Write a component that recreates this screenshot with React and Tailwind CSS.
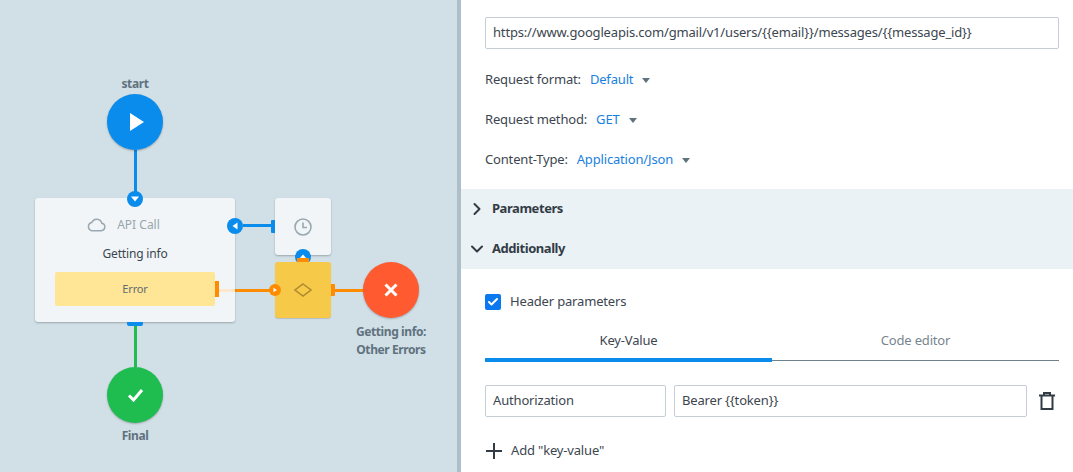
import { Check, ChevronDown, ChevronRight } from "lucide-react";

const FONT = "font-['Noto_Sans','Liberation_Sans',sans-serif]";

function Port({ className, dir, color = "bg-[#0a8ced]" }) {
  const points = {
    down: "4,5.5 12,5.5 8,10.5",
    left: "10.5,4.5 10.5,11.5 5.5,8",
    up: "4,10 12,10 8,5.5",
    right: "6,5 6,11 10.5,8",
  };
  return (
    <div className={`absolute rounded-full ${color} ${className}`}>
      <svg viewBox="0 0 16 16" className="h-full w-full">
        <polygon points={points[dir]} fill="#fff" />
      </svg>
    </div>
  );
}

function Canvas() {
  return (
    <div className="relative h-full w-[457px] shrink-0 bg-[#d1dfe6]">
      {/* connectors */}
      <div className="absolute left-[134px] top-[150px] h-[48px] w-[3px] bg-[#0a8ced]" />
      <div className="absolute left-[134px] top-[326px] h-[41px] w-[3px] bg-[#1fbc50]" />
      <div className="absolute left-[243px] top-[224px] h-[3px] w-[28px] bg-[#0a8ced]" />
      <div className="absolute left-[335px] top-[289px] h-[3px] w-[29px] bg-[#ff8c00]" />
      <div className="absolute left-[235px] top-[289px] h-[3px] w-[36px] bg-[#ff8c00]" />

      <p className="absolute left-[85px] top-[76px] w-[100px] text-center text-[12px] font-bold leading-4 tracking-[-0.4px] text-[#60727e]">
        start
      </p>
      <div className="absolute left-[107px] top-[94px] flex h-[56px] w-[56px] items-center justify-center rounded-full bg-[#0a8ced] shadow-[0_1px_2px_rgba(0,0,0,0.25)]">
        <svg viewBox="0 0 16 20" className="ml-[3px] h-[20px] w-[16px]">
          <polygon points="1,1 15,10 1,19" fill="#fff" />
        </svg>
      </div>

      {/* API call node */}
      <div className="absolute left-[35px] top-[198px] h-[124px] w-[200px] rounded-[3px] bg-[#f1f5f7] shadow-[0_1px_2px_rgba(0,0,0,0.25)]">
        <div className="mt-[17px] flex h-[20px] items-center justify-center gap-[11px] pr-[23px]">
          <svg viewBox="0 0 20 14" className="h-[14px] w-[19px]" fill="none" stroke="#9aa8b1" strokeWidth="1.6">
            <path d="M5 13h10a4 4 0 0 0 .6-7.9A5.6 5.6 0 0 0 5 4.4 4.4 4.4 0 0 0 5 13z" />
          </svg>
          <span className="text-[12px] leading-5 tracking-normal text-[#9aa5ad]">API Call</span>
        </div>
        <p className="mt-[9px] text-center text-[12px] leading-5 text-[#3c4650]">Getting info</p>
        <div className="relative mx-[20px] mt-[8px] flex h-[34px] items-center justify-center rounded-[2px] bg-[#ffe596] text-[11px] text-[#5f6b73]">
          Error
          <div className="absolute left-[160px] top-[9px] h-[16px] w-[4px] bg-[#ff8c00]" />
        </div>
      </div>
      <div className="absolute left-[219px] top-[289px] h-[3px] w-[16px] bg-[#fde7cf]" />
      <Port dir="down" className="left-[127px] top-[191px] h-[16px] w-[16px]" />
      <Port dir="left" className="left-[227px] top-[218px] h-[16px] w-[16px]" />
      <div className="absolute left-[127px] top-[322px] h-[4px] w-[16px] rounded-b-[2px] bg-[#0a8ced]" />

      {/* timer node */}
      <div className="absolute left-[275px] top-[198px] flex h-[57px] w-[56px] items-center justify-center rounded-[3px] bg-[#f1f5f7] shadow-[0_1px_2px_rgba(0,0,0,0.25)]">
        <svg viewBox="0 0 18 18" className="h-[18px] w-[18px]" fill="none" stroke="#9aa8b1" strokeWidth="1.6">
          <circle cx="9" cy="9" r="8" />
          <path d="M9 4.5V9.5H13" />
        </svg>
      </div>
      <div className="absolute left-[271px] top-[220px] h-[13px] w-[4px] rounded-l-[1px] bg-[#0a8ced]" />
      <Port dir="up" className="left-[295px] top-[249px] h-[16px] w-[16px]" />

      {/* condition node */}
      <div className="absolute left-[275px] top-[262px] flex h-[56px] w-[56px] items-center justify-center rounded-[3px] bg-[#f7c948] shadow-[0_1px_1px_rgba(0,0,0,0.15)]">
        <svg viewBox="0 0 18 14" className="h-[14px] w-[18px]" fill="none" stroke="#b08a30" strokeWidth="1.5">
          <path d="M9 1 17 7 9 13 1 7z" />
        </svg>
      </div>
      <div className="absolute left-[297px] top-[258px] h-[4px] w-[12px] bg-[#ff8c00]" />
      <div className="absolute left-[331px] top-[284px] h-[12px] w-[4px] rounded-r-[1px] bg-[#ff8c00]" />
      <Port dir="right" color="bg-[#ff8c00]" className="left-[269px] top-[284px] h-[12px] w-[12px]" />

      {/* end nodes */}
      <div className="absolute left-[363px] top-[262px] flex h-[56px] w-[56px] items-center justify-center rounded-full bg-[#ff5a30] shadow-[0_1px_2px_rgba(0,0,0,0.25)]">
        <svg viewBox="0 0 14 14" className="h-[14px] w-[14px]" fill="none" stroke="#fff" strokeWidth="3">
          <path d="M1.5 1.5 12.5 12.5M12.5 1.5 1.5 12.5" />
        </svg>
      </div>
      <p className="absolute left-[331px] top-[323px] w-[120px] text-center text-[12px] font-bold leading-[18px] tracking-[-0.4px] text-[#60727e]">
        Getting info:
        <br />
        Other Errors
      </p>
      <div className="absolute left-[107px] top-[367px] flex h-[56px] w-[56px] items-center justify-center rounded-full bg-[#1fbc50] shadow-[0_1px_2px_rgba(0,0,0,0.25)]">
        <svg viewBox="0 0 16 14" className="h-[14px] w-[17px]" fill="none" stroke="#fff" strokeWidth="3">
          <path d="M1.5 7.5 6 12 14.5 2" />
        </svg>
      </div>
      <p className="absolute left-[85px] top-[428px] w-[100px] text-center text-[12px] font-bold leading-4 tracking-[-0.4px] text-[#60727e]">
        Final
      </p>
    </div>
  );
}

function SelectRow({ label, value }) {
  return (
    <div className="flex h-[40px] items-center text-[13px] text-[#3c4650]">
      <span>{label}</span>
      <span className="ml-[9px] text-[#1a7fe0]">{value}</span>
      <span className="ml-[9px] h-0 w-0 border-x-[4px] border-t-[5px] border-x-transparent border-t-[#60727e]" />
    </div>
  );
}

function Section({ label, open }) {
  const Icon = open ? ChevronDown : ChevronRight;
  return (
    <div className="flex h-[40px] items-center gap-[5px] pl-[6px] text-[13px] font-bold tracking-[-0.45px] text-[#333c45]">
      <Icon className="h-[20px] w-[20px]" strokeWidth={2.4} />
      <span>{label}</span>
    </div>
  );
}

export default function App() {
  return (
    <div className={`flex h-[472px] w-[1073px] overflow-hidden bg-white tracking-[-0.17px] ${FONT}`}>
      <Canvas />
      <div className="h-full w-[4px] shrink-0 bg-[#aebfc9]" />
      <div className="min-w-0 flex-1">
        <div className="pl-[24px] pr-[14px] pt-[17px]">
          <div className="flex h-[32px] items-center rounded-[2px] border border-[#c5ced4] px-[7px] text-[13px] text-[#3c4650]">
            {"https://www.googleapis.com/gmail/v1/users/{{email}}/messages/{{message_id}}"}
          </div>
          <div className="mt-[11px]">
            <SelectRow label="Request format:" value="Default" />
            <SelectRow label="Request method:" value="GET" />
            <SelectRow label="Content-Type:" value="Application/Json" />
          </div>
        </div>
        <div className="mt-[9px] bg-[#ebf2f5]">
          <Section label="Parameters" />
          <Section label="Additionally" open />
        </div>
        <div className="pl-[24px] pr-[14px] pt-[24px]">
          <div className="flex h-[17px] items-center gap-[9px] text-[13px] text-[#3c4650]">
            <span className="flex h-[16px] w-[16px] items-center justify-center rounded-[2px] bg-[#0a78ee]">
              <Check className="h-[12px] w-[12px] text-white" strokeWidth={4} />
            </span>
            Header parameters
          </div>
          <div className="mt-[21px] flex h-[30px] border-b border-[#6f828e] text-[13px]">
            <div className="-mb-px flex h-[31px] w-[287px] justify-center border-b-4 border-[#0a8ced] text-[#3c4650]">
              Key-Value
            </div>
            <div className="flex flex-1 justify-center text-[#77858f]">Code editor</div>
          </div>
          <div className="mt-[24px] flex items-center gap-[8px] text-[13px] text-[#3c4650]">
            <div className="flex h-[32px] w-[181px] items-center rounded-[2px] border border-[#c5ced4] px-[7px]">Authorization</div>
            <div className="flex h-[32px] w-[353px] items-center rounded-[2px] border border-[#c5ced4] px-[7px]">{"Bearer {{token}}"}</div>
            <svg viewBox="0 0 16 18" className="ml-[4px] h-[18px] w-[16px]" fill="none" stroke="#333c45" strokeWidth="2">
              <path d="M0 3.5H16M5 3.5V1H11V3.5M2.5 3.5V17H13.5V3.5" />
            </svg>
          </div>
          <div className="mt-[24px] flex items-center gap-[9px] pl-px text-[13px] text-[#3c4650]">
            <svg viewBox="0 0 16 16" className="h-[16px] w-[16px]" fill="none" stroke="#333c45" strokeWidth="2">
              <path d="M8 0V16M0 8H16" />
            </svg>
            {'Add "key-value"'}
          </div>
        </div>
      </div>
    </div>
  );
}
